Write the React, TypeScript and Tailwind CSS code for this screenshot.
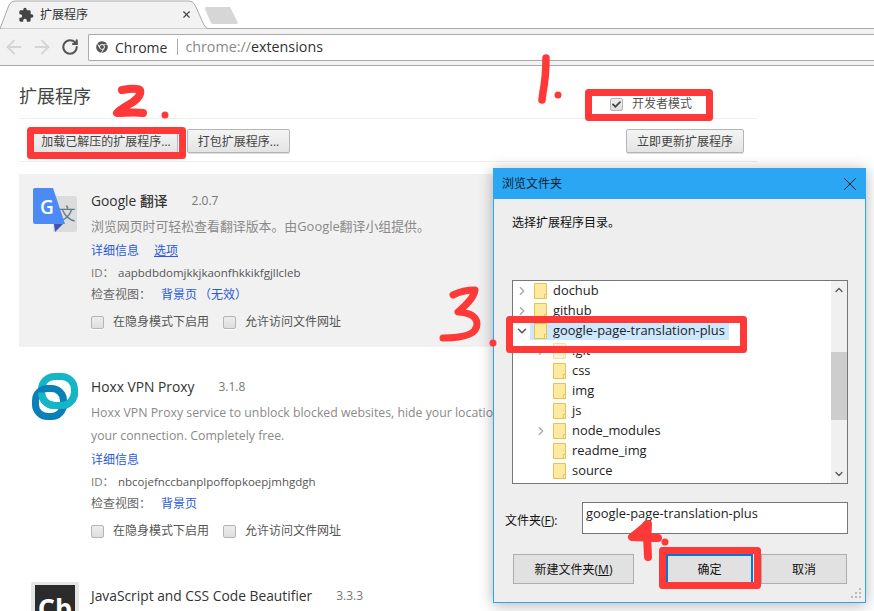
import { ArrowLeft, ArrowRight, ChevronDown, ChevronRight, ChevronUp, RotateCw, X } from "lucide-react";
import { FaCheck, FaChrome } from "react-icons/fa";

const Check = ({ label, checked }: { label: string; checked?: boolean }) => (
  <label className="flex items-center">
    <span className="flex h-[13px] w-[13px] items-center justify-center rounded-[2px] border border-[#b5b5b5] bg-[linear-gradient(#ededed,#dedede)] shadow-[0_1px_0_#fff]">
      {checked && <FaCheck className="h-[9px] w-[9px] text-[#444]" />}
    </span>
    <span className="ml-[9px] text-[12px] leading-[18px] text-[#555]">{label}</span>
  </label>
);

const GButton = ({ children, w }: { children: string; w: string }) => (
  <button className={"h-[24px] rounded-[2px] border border-[#b5b5b5] bg-[linear-gradient(#f4f4f4,#e4e4e4)] pt-[1px] text-center text-[12px] text-[#444] shadow-[0_1px_0_#ddd] " + w}>
    {children}
  </button>
);

const Link = ({ children, u }: { children: string; u?: boolean }) => (
  <span className={"text-[#2a5bd7] " + (u ? "underline" : "")}>{children}</span>
);

const Card = ({
  icon,
  name,
  version,
  gap,
  desc,
  descSize,
  options,
  id,
  invalid,
  active,
}: {
  icon: React.ReactNode;
  name: string;
  version: string;
  gap: string;
  desc?: string[];
  descSize?: string;
  options?: boolean;
  id?: string;
  invalid?: boolean;
  active?: boolean;
}) => (
  <div className={"flex gap-3 pb-[16px] pl-3 pt-[13px] " + (active ? "bg-[#f1f1f1]" : "")}>
    <div className="h-[48px] w-[48px] shrink-0">{icon}</div>
    <div className="pt-[4px]">
      <div className="flex h-[20px] items-center text-[13.8px]">
        <span className="font-medium text-[#333]">{name}</span>
        <span className={"text-[12px] text-[#777] " + gap}>{version}</span>
      </div>
      {desc && (
        <>
          <div className={"mt-[4px] leading-[23px] text-[#8a8a8a] " + descSize}>
            {desc.map((d) => (
              <div key={d} className="whitespace-nowrap">{d}</div>
            ))}
          </div>
          <div className="flex h-[23px] items-center gap-[15px] pt-[2px] text-[12px]">
            <Link>详细信息</Link>
            {options && <Link u>选项</Link>}
          </div>
          <div className="flex h-[23px] items-center text-[11.5px] text-[#555]">
            <span className="w-[27px] text-[#777]">ID：</span>
            <span>{id}</span>
          </div>
          <div className="flex h-[21px] items-center text-[12px] text-[#666]">
            <span className="w-[70px]">检查视图：</span>
            <Link>背景页</Link>
            {invalid && <span className="ml-[2px] text-[#2a5bd7]">（无效）</span>}
          </div>
          <div className="mt-[8px] flex gap-[14px]">
            <Check label="在隐身模式下启用" />
            <Check label="允许访问文件网址" />
          </div>
        </>
      )}
    </div>
  </div>
);

const GoogleIcon = () => (
  <svg viewBox="0 0 48 48" className="h-[48px] w-[48px]">
    <rect x="22" y="9" width="24" height="36" rx="2" fill="#dcdcdc" />
    <text x="36" y="33" fontSize="17" textAnchor="middle" fill="#607d8b" fontFamily="Noto Sans CJK SC">文</text>
    <path d="M23 37h9l-8 8z" fill="#3f51b5" />
    <path d="M4 1h18l12 36H4a2 2 0 0 1-2-2V3a2 2 0 0 1 2-2z" fill="#4c8bf5" />
    <text x="16" y="27" fontSize="19" fontWeight="600" textAnchor="middle" fill="#fff" fontFamily="Open Sans">G</text>
  </svg>
);

const HoxxIcon = () => (
  <svg viewBox="0 0 48 48" fill="none" className="h-[48px] w-[48px]">
    <rect x="10.500" y="3.500" width="33" height="29" rx="13" stroke="#14b5c4" strokeWidth="7" />
    <rect x="4.500" y="15.500" width="28" height="28" rx="12" stroke="#0a7fb8" strokeWidth="7" />
    <path d="M43.500 19.500a13 13 0 0 1-13 13h-7a13 13 0 0 1-13-13" stroke="#14b5c4" strokeWidth="7" />
  </svg>
);

const CbIcon = () => (
  <div className="flex h-[48px] w-[48px] items-start justify-center rounded-[2px] bg-[#e6e6e6] pt-[3px]">
    <div className="flex h-[42px] w-[40px] items-start justify-center bg-[#2b2b2b] pt-[9px] text-[27px] font-bold leading-[27px] text-white">Cb</div>
  </div>
);

const Folder = ({ faded }: { faded?: boolean }) => (
  <svg viewBox="0 0 13 16" className={"h-[16px] w-[13px] shrink-0 " + (faded ? "opacity-50" : "")}>
    <path d="M.5.5h12v15H.5z" fill="#fde9a0" stroke="#e6c34f" />
    <path d="M10.500 11.500h2v4h-2z" fill="#fff6d0" stroke="#e6c34f" />
  </svg>
);

const Row = ({
  name,
  level,
  state,
  selected,
  faded,
}: {
  name?: string;
  level: number;
  state?: "open" | "closed";
  selected?: boolean;
  faded?: boolean;
}) => (
  <div className={"flex h-[20px] items-center " + (level ? "pl-[20px]" : "pl-px")}>
    <span className="flex w-[16px] justify-center">
      {state === "closed" && <ChevronRight size={14} strokeWidth={2} className="text-[#a6a6a6]" />}
      {state === "open" && <ChevronDown size={14} strokeWidth={2.500} className="text-[#555]" />}
    </span>
    <div className={"flex h-[18px] items-center gap-[6px] pl-[4px] pr-[4px] " + (selected ? "bg-[#cce8ff]" : "")}>
      <Folder faded={faded} />
      {name && <span className="text-[12.9px] text-[#222]">{name}</span>}
    </div>
  </div>
);

const DButton = ({ children, primary, w }: { children: React.ReactNode; primary?: boolean; w: string }) => (
  <button className={"h-[30px] border bg-[#e1e1e1] pt-[1px] text-[12px] text-[#111] " + w + " " + (primary ? "border-2 border-[#0078d7]" : "border-[#adadad]")}>
    {children}
  </button>
);

export default function App() {
  return (
    <div className="relative h-[611px] w-[874px] overflow-hidden bg-white font-['Open_Sans','Noto_Sans_CJK_SC',sans-serif]">
      {/* tab strip */}
      <div className="relative flex h-[29px] items-center border-b border-[#aaa] bg-white">
        <svg viewBox="0 0 240 29" className="absolute left-0 top-0 h-[29px] w-[240px]">
          <path d="M0 29 L1 26 L9 5 Q11 1 15 1 L189 1 Q193 1 195 5 L204 25 Q206 29 210 29 Z" fill="#f2f2f2" stroke="#aaa" />
          <path d="M207 7h23l8 16q0 1-2 1h-23q-1 0-2-1l-6-14q-1-2 2-2z" fill="#d6d6d6" />
        </svg>
        <div className="relative flex w-[192px] items-center pl-[18px] pt-[1px]">
          <svg viewBox="0 0 24 24" className="h-[16px] w-[16px]" fill="#444">
            <path d="M20.500 11H19V7c0-1.100-.9-2-2-2h-4V3.500C13 2.120 11.880 1 10.500 1S8 2.120 8 3.500V5H4c-1.100 0-1.990.9-1.990 2v3.800H3.500c1.490 0 2.700 1.210 2.700 2.700s-1.210 2.700-2.700 2.700H2V20c0 1.100.9 2 2 2h3.800v-1.500c0-1.490 1.210-2.700 2.700-2.700 1.490 0 2.700 1.210 2.700 2.700V22H17c1.100 0 2-.9 2-2v-4h1.500c1.380 0 2.500-1.120 2.500-2.500S21.880 11 20.500 11z" />
          </svg>
          <span className="ml-[6px] text-[12px] text-[#333]">扩展程序</span>
          <X size={11} strokeWidth={2.500} className="ml-auto text-[#444]" />
        </div>
      </div>
      {/* toolbar */}
      <div className="flex h-[37px] items-center border-b border-[#aaa] bg-[#f2f2f2] pl-[3px]">
        <ArrowLeft size={22} strokeWidth={2} className="text-[#d4d4d4]" />
        <ArrowRight size={22} strokeWidth={2} className="ml-[6px] text-[#d4d4d4]" />
        <span className="ml-[6px] flex w-[22px] justify-center">
          <RotateCw size={18} strokeWidth={2.800} className="text-[#555]" />
        </span>
        <div className="ml-[7px] flex h-[27px] flex-1 items-center rounded-l-[2px] border border-r-0 border-[#aaa] bg-white pl-[7px]">
          <FaChrome className="h-[12px] w-[12px] text-[#555]" />
          <span className="ml-[7px] text-[14px] text-[#333]">Chrome</span>
          <span className="ml-[10px] h-[16px] w-px bg-[#aaa]" />
          <span className="ml-[7px] text-[14.3px] text-[#333]"><span className="text-[#888]">chrome://</span>extensions</span>
        </div>
      </div>
      {/* page */}
      <div className="ml-[19px] w-[738px]">
        <div className="flex h-[53px] items-start border-b border-[#eee] pt-[21px]">
          <h1 className="text-[18px] leading-[18px] text-[#444]">扩展程序</h1>
          <div className="ml-auto mr-[65px] mt-[8px]"><Check checked label="开发者模式" /></div>
        </div>
        <div className="flex h-[43px] items-start justify-between border-b border-[#eee] pl-3 pr-[13px] pt-[10px]">
          <div className="flex gap-[9px]">
            <GButton w="w-[147px] pl-[3px]">加载已解压的扩展程序...</GButton>
            <GButton w="w-[103px]">打包扩展程序...</GButton>
          </div>
          <GButton w="w-[118px]">立即更新扩展程序</GButton>
        </div>
        <div className="mt-[12px] flex flex-col gap-[13px]">
          <Card
            active
            icon={<GoogleIcon />}
            name="Google 翻译"
            version="2.0.7"
            gap="ml-[24px]"
            desc={["浏览网页时可轻松查看翻译版本。由Google翻译小组提供。"]}
            descSize="text-[12.9px]"
            options
            id="aapbdbdomjkkjkaonfhkkikfgjllcleb"
            invalid
          />
          <Card
            icon={<HoxxIcon />}
            name="Hoxx VPN Proxy"
            version="3.1.8"
            gap="ml-[24px]"
            desc={["Hoxx VPN Proxy service to unblock blocked websites, hide your location", "your connection. Completely free."]}
            descSize="text-[12.3px]"
            id="nbcojefnccbanplpoffopkoepjmhgdgh"
          />
          <Card icon={<CbIcon />} name="JavaScript and CSS Code Beautifier" version="3.3.3" gap="ml-[24px]" />
        </div>
      </div>

      {/* dialog */}
      <div className="absolute left-[493px] top-[168px] flex h-[435px] w-[373px] flex-col border border-[#2aa6f2] bg-[#eee] shadow-[0_2px_14px_rgba(0,0,0,0.3)]">
        <div className="flex h-[30px] shrink-0 items-center justify-between bg-[#2aa6f2] pl-[8px] pr-[4px]">
          <span className="text-[12px] text-[#123]">浏览文件夹</span>
          <X size={22} strokeWidth={1} className="text-[#111]" />
        </div>
        <div className="ml-[18px] mt-[15px] h-[18px] text-[12px] leading-[18px] text-[#111]">选择扩展程序目录。</div>
        <div className="relative ml-[18px] mt-[48px] h-[204px] w-[336px] shrink-0 overflow-hidden border border-[#777] bg-white">
          <Row name="dochub" level={0} state="closed" />
          <Row name="github" level={0} state="closed" />
          <Row name="google-page-translation-plus" level={0} state="open" selected />
          <Row name=".git" level={1} state="closed" faded />
          <Row name="css" level={1} />
          <Row name="img" level={1} />
          <Row name="js" level={1} />
          <Row name="node_modules" level={1} state="closed" />
          <Row name="readme_img" level={1} />
          <Row name="source" level={1} />
          <Row level={0} />
          <div className="absolute bottom-0 right-0 top-0 flex w-[16px] flex-col items-center justify-between bg-[#f0f0f0] py-[3px]">
            <ChevronUp size={12} strokeWidth={2.500} className="text-[#555]" />
            <ChevronDown size={12} strokeWidth={2.500} className="text-[#555]" />
          </div>
          <div className="absolute right-0 top-[71px] h-[68px] w-[16px] bg-[#cdcdcd]" />
        </div>
        <div className="ml-[11px] mt-[18px] flex items-start">
          <span className="mt-[10px] w-[77px] text-[12px] text-[#111]">文件夹(<span className="underline">F</span>):</span>
          <div className="flex h-[32px] w-[266px] items-start border border-[#777] bg-white pl-[3px] pt-[1px] text-[12.9px] text-[#222]">google-page-translation-plus</div>
        </div>
        <div className="ml-[19px] mt-[20px] flex">
          <DButton w="w-[121px]">新建文件夹(<span className="underline">M</span>)</DButton>
          <div className="ml-[32px]"><DButton primary w="w-[87px]">确定</DButton></div>
          <div className="ml-[8px]"><DButton w="w-[86px]">取消</DButton></div>
        </div>
        <svg viewBox="0 0 12 12" className="absolute bottom-[2px] right-[2px] h-[12px] w-[12px]" fill="#bbb">
          <rect x="8" y="0" width="2" height="2" /><rect x="4" y="4" width="2" height="2" /><rect x="8" y="4" width="2" height="2" /><rect x="0" y="8" width="2" height="2" /><rect x="4" y="8" width="2" height="2" /><rect x="8" y="8" width="2" height="2" />
        </svg>
      </div>

      {/* red annotations */}
      <svg viewBox="0 0 874 611" className="pointer-events-none absolute inset-0 h-[611px] w-[874px]" fill="none" stroke="#ff3838" strokeLinecap="round" strokeLinejoin="round">
        <g strokeWidth="7" strokeLinecap="butt">
          <rect x="30.500" y="130.500" width="152" height="25" />
          <rect x="588.500" y="92.500" width="121" height="25" />
          <rect x="509.500" y="319.500" width="234" height="30" />
          <rect x="662.500" y="550.500" width="95" height="35" />
        </g>
        <path d="M546 58c0 14-1 24-3 34l-1 8" strokeWidth="7.500" />
        <circle cx="558" cy="95" r="3.500" fill="#ff3838" stroke="none" />
        <path d="M122 90c6-1 15-2 18 0 2 6-6 12-12 15-3 2-8 5-11 8 8 0 18-1 26 0" strokeWidth="8" />
        <circle cx="165" cy="115" r="3.500" fill="#ff3838" stroke="none" />
        <path d="M453 295c6-3 15-5 22-5-1 8-10 16-17 22 6 0 19 2 19 12 0 11-16 14-34 14" strokeWidth="7" />
        <circle cx="493" cy="343" r="3.500" fill="#ff3838" stroke="none" />
        <path d="M647 524c-4 5-10 9-15 13 9 0 18 1 26 1M648 524c-1 11-1 22 0 33" strokeWidth="8" />
        <circle cx="665" cy="542" r="3.500" fill="#ff3838" stroke="none" />
      </svg>
    </div>
  );
}
